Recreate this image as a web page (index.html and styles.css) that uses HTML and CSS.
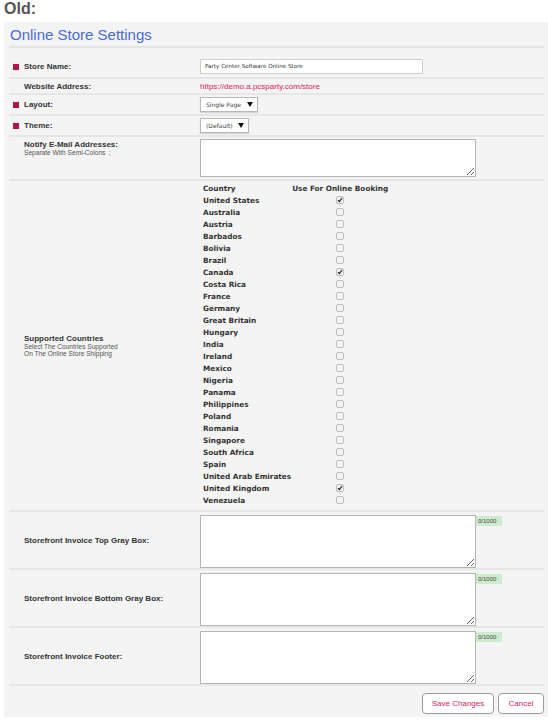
FILE: index.html
```html
<!DOCTYPE html>
<html>
<head>
<meta charset="utf-8">
<link rel="stylesheet" href="styles.css">
</head>
<body>
<div class="old">Old:</div>
<div class="panel">
  <div class="title">Online Store Settings</div>

  <div class="row r-store">
    <div class="lbl"><span class="dot"></span>Store Name:</div>
    <div class="val"><div class="input">Party Center Software Online Store</div></div>
  </div>

  <div class="row r-web">
    <div class="lbl plain">Website Address:</div>
    <div class="val"><span class="link">https://demo.a.pcsparty.com/store</span></div>
  </div>

  <div class="row r-sel">
    <div class="lbl"><span class="dot"></span>Layout:</div>
    <div class="val"><div class="select s-layout"><span>Single Page</span><svg class="arrow" width="6" height="5" viewBox="0 0 6 5"><path d="M0 0H6L3 5Z" fill="#111"/></svg></div></div>
  </div>

  <div class="row r-sel2">
    <div class="lbl"><span class="dot"></span>Theme:</div>
    <div class="val"><div class="select s-theme"><span>(Default)</span><svg class="arrow" width="6" height="5" viewBox="0 0 6 5"><path d="M0 0H6L3 5Z" fill="#111"/></svg></div></div>
  </div>

  <div class="row r-notify">
    <div class="lbl plain top">
      <div>Notify E-Mail Addresses:</div>
      <div class="desc">Separate With Semi-Colons &nbsp;;</div>
    </div>
    <div class="val top"><textarea class="ta ta-notify"></textarea></div>
  </div>

  <div class="row r-countries">
    <div class="lbl plain">
      <div class="stack">
        <div>Supported Countries</div>
        <div class="desc">Select The Countries Supported</div>
        <div class="desc">On The Online Store Shipping</div>
      </div>
    </div>
    <div class="val top">
      <table class="ctable">
        <tr><th class="cn">Country</th><th class="cb">Use For Online Booking</th></tr>
        <tr><td class="cn">United States</td><td class="cb"><span class="chk on"><svg width="8" height="8" viewBox="0 0 8 8"><path d="M2 4.2L3.3 5.6L6 2.2" fill="none" stroke="#222" stroke-width="1.2"/></svg></span></td></tr>
        <tr><td class="cn">Australia</td><td class="cb"><span class="chk"></span></td></tr>
        <tr><td class="cn">Austria</td><td class="cb"><span class="chk"></span></td></tr>
        <tr><td class="cn">Barbados</td><td class="cb"><span class="chk"></span></td></tr>
        <tr><td class="cn">Bolivia</td><td class="cb"><span class="chk"></span></td></tr>
        <tr><td class="cn">Brazil</td><td class="cb"><span class="chk"></span></td></tr>
        <tr><td class="cn">Canada</td><td class="cb"><span class="chk on"><svg width="8" height="8" viewBox="0 0 8 8"><path d="M2 4.2L3.3 5.6L6 2.2" fill="none" stroke="#222" stroke-width="1.2"/></svg></span></td></tr>
        <tr><td class="cn">Costa Rica</td><td class="cb"><span class="chk"></span></td></tr>
        <tr><td class="cn">France</td><td class="cb"><span class="chk"></span></td></tr>
        <tr><td class="cn">Germany</td><td class="cb"><span class="chk"></span></td></tr>
        <tr><td class="cn">Great Britain</td><td class="cb"><span class="chk"></span></td></tr>
        <tr><td class="cn">Hungary</td><td class="cb"><span class="chk"></span></td></tr>
        <tr><td class="cn">India</td><td class="cb"><span class="chk"></span></td></tr>
        <tr><td class="cn">Ireland</td><td class="cb"><span class="chk"></span></td></tr>
        <tr><td class="cn">Mexico</td><td class="cb"><span class="chk"></span></td></tr>
        <tr><td class="cn">Nigeria</td><td class="cb"><span class="chk"></span></td></tr>
        <tr><td class="cn">Panama</td><td class="cb"><span class="chk"></span></td></tr>
        <tr><td class="cn">Philippines</td><td class="cb"><span class="chk"></span></td></tr>
        <tr><td class="cn">Poland</td><td class="cb"><span class="chk"></span></td></tr>
        <tr><td class="cn">Romania</td><td class="cb"><span class="chk"></span></td></tr>
        <tr><td class="cn">Singapore</td><td class="cb"><span class="chk"></span></td></tr>
        <tr><td class="cn">South Africa</td><td class="cb"><span class="chk"></span></td></tr>
        <tr><td class="cn">Spain</td><td class="cb"><span class="chk"></span></td></tr>
        <tr><td class="cn">United Arab Emirates</td><td class="cb"><span class="chk"></span></td></tr>
        <tr><td class="cn">United Kingdom</td><td class="cb"><span class="chk on"><svg width="8" height="8" viewBox="0 0 8 8"><path d="M2 4.2L3.3 5.6L6 2.2" fill="none" stroke="#222" stroke-width="1.2"/></svg></span></td></tr>
        <tr><td class="cn">Venezuela</td><td class="cb"><span class="chk"></span></td></tr>
      </table>
    </div>
  </div>

  <div class="row r-inv">
    <div class="lbl plain">Storefront Invoice Top Gray Box:</div>
    <div class="val top"><textarea class="ta ta-inv"></textarea><span class="count">0/1000</span></div>
  </div>

  <div class="row r-inv">
    <div class="lbl plain">Storefront Invoice Bottom Gray Box:</div>
    <div class="val top"><textarea class="ta ta-inv"></textarea><span class="count">0/1000</span></div>
  </div>

  <div class="row r-inv">
    <div class="lbl plain">Storefront Invoice Footer:</div>
    <div class="val top"><textarea class="ta ta-inv"></textarea><span class="count">0/1000</span></div>
  </div>

  <div class="actions">
    <button class="btn b-save">Save Changes</button>
    <button class="btn b-cancel">Cancel</button>
  </div>
</div>
</body>
</html>
```

FILE: styles.css
```css
* { box-sizing: border-box; }
html, body { margin: 0; padding: 0; background: #fff; }
body {
  padding-left: 4px;
  font-family: "Liberation Sans", Arial, sans-serif;
  color: #333;
}
.old {
  height: 22px;
  font-size: 16px;
  line-height: 18px;
  font-weight: bold;
  color: #555;
  padding-left: 0;
}
.panel {
  width: 544px;
  height: 695px;
  background: #f4f4f4;
  padding: 0 4px 0 5px;
}
.title {
  font-size: 15px;
  line-height: 17px;
  color: #4a6ad8;
  padding: 4px 1px 3px;
  border-bottom: 2px solid #e4e4e4;
  margin-bottom: 8px;
}
.row {
  display: grid;
  grid-template-columns: 191px 1fr;
  border-bottom: 2px solid #e6e6e6;
}
.r-store { height: 23px; }
.r-web { height: 16px; }
.r-sel { height: 21px; }
.r-sel2 { height: 21px; }
.r-notify { height: 44px; }
.r-countries { height: 331px; }
.r-inv { height: 58px; }
.lbl {
  display: flex;
  align-items: center;
  padding-left: 4px;
  font-size: 8px;
  font-weight: bold;
  color: #333;
}
.lbl.plain { padding-left: 15px; }
.lbl.top {
  flex-direction: column;
  align-items: flex-start;
  justify-content: flex-start;
  padding-top: 3px;
}
.dot {
  width: 6px;
  height: 6px;
  background: #b3124f;
  margin-right: 5px;
  flex: none;
}
.desc {
  font-size: 6.6px;
  font-weight: normal;
  color: #555;
  line-height: 7px;
}
.stack { line-height: 9px; }
.val {
  display: flex;
  align-items: center;
}
.val.top { align-items: flex-start; padding-top: 2px; }
.input {
  width: 223px;
  height: 15px;
  background: #fff;
  border: 1px solid #cfcfcf;
  font-family: "DejaVu Sans", Verdana, sans-serif;
  font-size: 5.6px;
  line-height: 13px;
  padding-left: 4px;
  color: #333;
}
.link {
  font-size: 8px;
  color: #d81b60;
}
.select {
  display: flex;
  align-items: center;
  justify-content: space-between;
  height: 15px;
  background: #fff;
  border: 1px solid #b8b8b8;
  box-shadow: 0 1px 1px rgba(0,0,0,0.12);
  padding: 0 4px 0 5px;
  font-family: "DejaVu Sans", Verdana, sans-serif;
  font-size: 6px;
  color: #444;
}
.s-layout { width: 58px; }
.s-theme { width: 49px; }
.arrow { display: block; }
.ta {
  display: block;
  background: #fff;
  border: 1px solid #b5b5b5;
  margin: 0;
  padding: 2px;
  resize: both;
}
.ta-notify { width: 276px; height: 38px; }
.ta-inv { width: 276px; height: 53px; margin-top: 1px; }
.count {
  display: block;
  background: #cdeccd;
  font-size: 6px;
  line-height: 10px;
  height: 10px;
  width: 26px;
  padding: 0 0 0 2px;
  margin-top: 2px;
  color: #444;
}
.ctable {
  border-collapse: collapse;
  margin-left: 1px;
  font-family: "DejaVu Sans", Verdana, sans-serif;
  font-size: 7.3px;
  font-weight: bold;
  color: #333;
  white-space: nowrap;
}
.ctable th, .ctable td {
  height: 12px;
  padding: 0;
  line-height: 12px;
  font-weight: bold;
  vertical-align: middle;
}
.ctable .cn { width: 90px; min-width: 90px; text-align: left; padding-left: 2px; }
.ctable .cb { text-align: center; width: 98px; }
.chk {
  display: inline-block;
  width: 8px;
  height: 8px;
  border: 1px solid #bdbdbd;
  border-radius: 2px;
  background: #f2f2f2;
  vertical-align: middle;
  position: relative;
  top: -1px;
}
.chk svg {
  display: block;
  margin: -1px 0 0 -1px;
}
.actions {
  display: flex;
  justify-content: flex-end;
  gap: 4px;
  padding-top: 7px;
  padding-right: 0;
}
.btn {
  height: 21px;
  background: #fff;
  border: 1px solid #9c9c9c;
  border-radius: 4px;
  font-family: "Liberation Sans", Arial, sans-serif;
  font-size: 8px;
  color: #d81b60;
  padding: 0;
  margin: 0;
}
.b-save { width: 72px; }
.b-cancel { width: 46px; }
```
